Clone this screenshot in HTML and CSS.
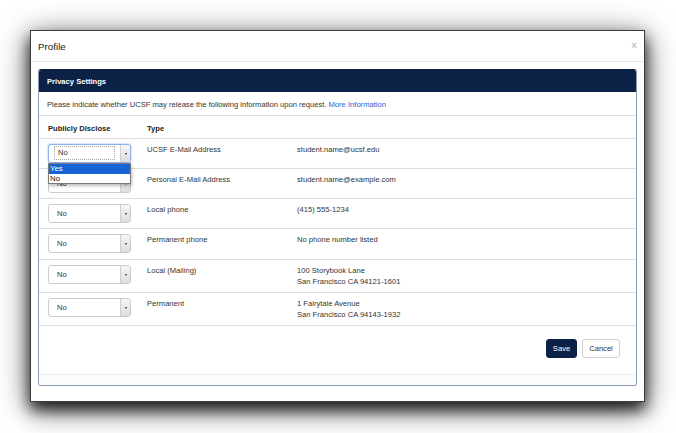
FILE: index.html
```html
<!DOCTYPE html>
<html>
<head>
<meta charset="utf-8">
<link rel="stylesheet" href="styles.css">
</head>
<body>
<div class="modal">
  <div class="modal-header">
    <span class="title">Profile</span>
    <span class="close">×</span>
  </div>
  <div class="modal-body">
    <div class="panel">
      <div class="panel-heading">Privacy Settings</div>
      <div class="intro">Please indicate whether UCSF may release the following information upon request. <a class="link">More Information</a></div>
      <div class="grid">
        <div class="row head">
          <div class="cell">Publicly Disclose</div>
          <div class="cell">Type</div>
          <div class="cell"></div>
        </div>
        <div class="row">
          <div class="cell">
            <div class="sel focused">
              <div class="sel-val"><span class="focusbox">No</span></div>
              <div class="sel-btn"><i class="tri"></i></div>
              <div class="dropdown">
                <div class="opt active">Yes</div>
                <div class="opt">No</div>
              </div>
            </div>
          </div>
          <div class="cell">UCSF E-Mail Address</div>
          <div class="cell">student.name@ucsf.edu</div>
        </div>
        <div class="row">
          <div class="cell"><div class="sel"><div class="sel-val">No</div><div class="sel-btn"><i class="tri"></i></div></div></div>
          <div class="cell">Personal E-Mail Address</div>
          <div class="cell">student.name@example.com</div>
        </div>
        <div class="row">
          <div class="cell"><div class="sel"><div class="sel-val">No</div><div class="sel-btn"><i class="tri"></i></div></div></div>
          <div class="cell">Local phone</div>
          <div class="cell">(415) 555-1234</div>
        </div>
        <div class="row tall">
          <div class="cell"><div class="sel"><div class="sel-val">No</div><div class="sel-btn"><i class="tri"></i></div></div></div>
          <div class="cell">Permanent phone</div>
          <div class="cell">No phone number listed</div>
        </div>
        <div class="row">
          <div class="cell"><div class="sel"><div class="sel-val">No</div><div class="sel-btn"><i class="tri"></i></div></div></div>
          <div class="cell">Local (Mailing)</div>
          <div class="cell">100 Storybook Lane<br>San Francisco CA 94121-1601</div>
        </div>
        <div class="row last">
          <div class="cell"><div class="sel"><div class="sel-val">No</div><div class="sel-btn"><i class="tri"></i></div></div></div>
          <div class="cell">Permanent</div>
          <div class="cell">1 Fairytale Avenue<br>San Francisco CA 94143-1932</div>
        </div>
      </div>
      <div class="actions">
        <button class="btn save">Save</button>
        <button class="btn cancel">Cancel</button>
      </div>
      <div class="panel-foot"></div>
    </div>
  </div>
</div>
</body>
</html>
```
FILE: styles.css
```css
* { box-sizing: border-box; }
html, body { margin: 0; padding: 0; background: #fff; }
body {
  font-family: "Liberation Sans", Arial, sans-serif;
  color: #333;
  font-size: 7.6px;
  min-height: 433px;
}
.modal {
  margin: 30px 0 0 30px;
  width: 615px;
  height: 372px;
  border: 1px solid #3c3c3c;
  background: #fff;
  box-shadow: 0 8px 14px rgba(0,0,0,0.8), 0 6px 30px rgba(0,0,0,0.6);
}
.modal-header {
  height: 31px;
  border-bottom: 1px solid #e6e6e6;
  display: flex;
  align-items: center;
  justify-content: space-between;
  padding: 0 7px 0 7px;
}
.title { font-size: 9.8px; color: #222; }
.close { font-size: 10px; color: #c4c4c4; font-weight: bold; margin-top: -2px; }
.modal-body { padding: 7px 7px 15px 7px; }
.panel {
  border: 1px solid #8a99b2;
  border-top-color: #0b2145;
  border-radius: 3px;
  overflow: hidden;
}
.panel-heading {
  height: 22px;
  background: #0b2145;
  color: #fff;
  font-weight: bold;
  display: flex;
  align-items: center;
  padding-left: 8px;
}
.intro { padding: 7px 8px 5px 8px; line-height: 11px; }
.link { color: #1f5fe0; }
.row {
  display: grid;
  grid-template-columns: 99px 150px 1fr;
  border-top: 1px solid #dedede;
}
.row.last { border-bottom: 1px solid #dedede; }
.cell { padding: 5px 9px; line-height: 11px; }
.row.tall .cell { padding-bottom: 6px; }
.row.head .cell { padding: 7px 9px 4px 9px; font-weight: bold; color: #222; }
.sel {
  position: relative;
  width: 83px;
  height: 19px;
  border: 1px solid #cbcbcb;
  border-radius: 3px;
  display: flex;
  background: #fff;
}
.sel-val { flex: 1; padding-left: 8px; line-height: 17px; }
.sel-btn {
  width: 10px;
  border-left: 1px solid #cfcfcf;
  background: linear-gradient(#f6f6f6, #dcdcdc);
  border-radius: 0 2px 2px 0;
  display: flex;
  align-items: center;
  justify-content: center;
}
.tri {
  display: block;
  width: 0; height: 0;
  border-left: 1.5px solid transparent;
  border-right: 1.5px solid transparent;
  border-top: 2.5px solid #222;
}
.sel.focused { border-color: #8db3e8; box-shadow: 0 0 2px #7fa8e6; }
.sel.focused .sel-val { padding: 1px 5px 1px 5px; line-height: 13px; }
.focusbox {
  display: block;
  height: 14px;
  border: 1px dotted #a8a8a8;
  padding-left: 3px;
  line-height: 12px;
  color: #333;
}
.dropdown {
  position: absolute;
  top: 18px;
  left: -1px;
  width: 83px;
  border: 1px solid #7a7a7a;
  background: #fff;
  box-shadow: 1px 2px 3px rgba(0,0,0,0.25);
  z-index: 2;
}
.opt { height: 9.5px; line-height: 9.5px; padding-left: 1px; color: #111; font-size: 7.8px; }
.opt.active { background: #1763d6; color: #fff; }
.actions {
  display: flex;
  justify-content: flex-end;
  gap: 5px;
  padding: 13px 16px 16px 0;
}
.btn {
  font-family: "Liberation Sans", Arial, sans-serif;
  font-size: 7.6px;
  height: 19px;
  border-radius: 3px;
  padding: 0;
  margin: 0;
}
.save { width: 31px; background: #0b2145; color: #fff; border: 1px solid #0b2145; }
.cancel { width: 38px; background: #fff; color: #333; border: 1px solid #cfcfcf; }
.panel-foot { height: 11px; border-top: 1px solid #ececec; background: #fcfcfc; }
```
